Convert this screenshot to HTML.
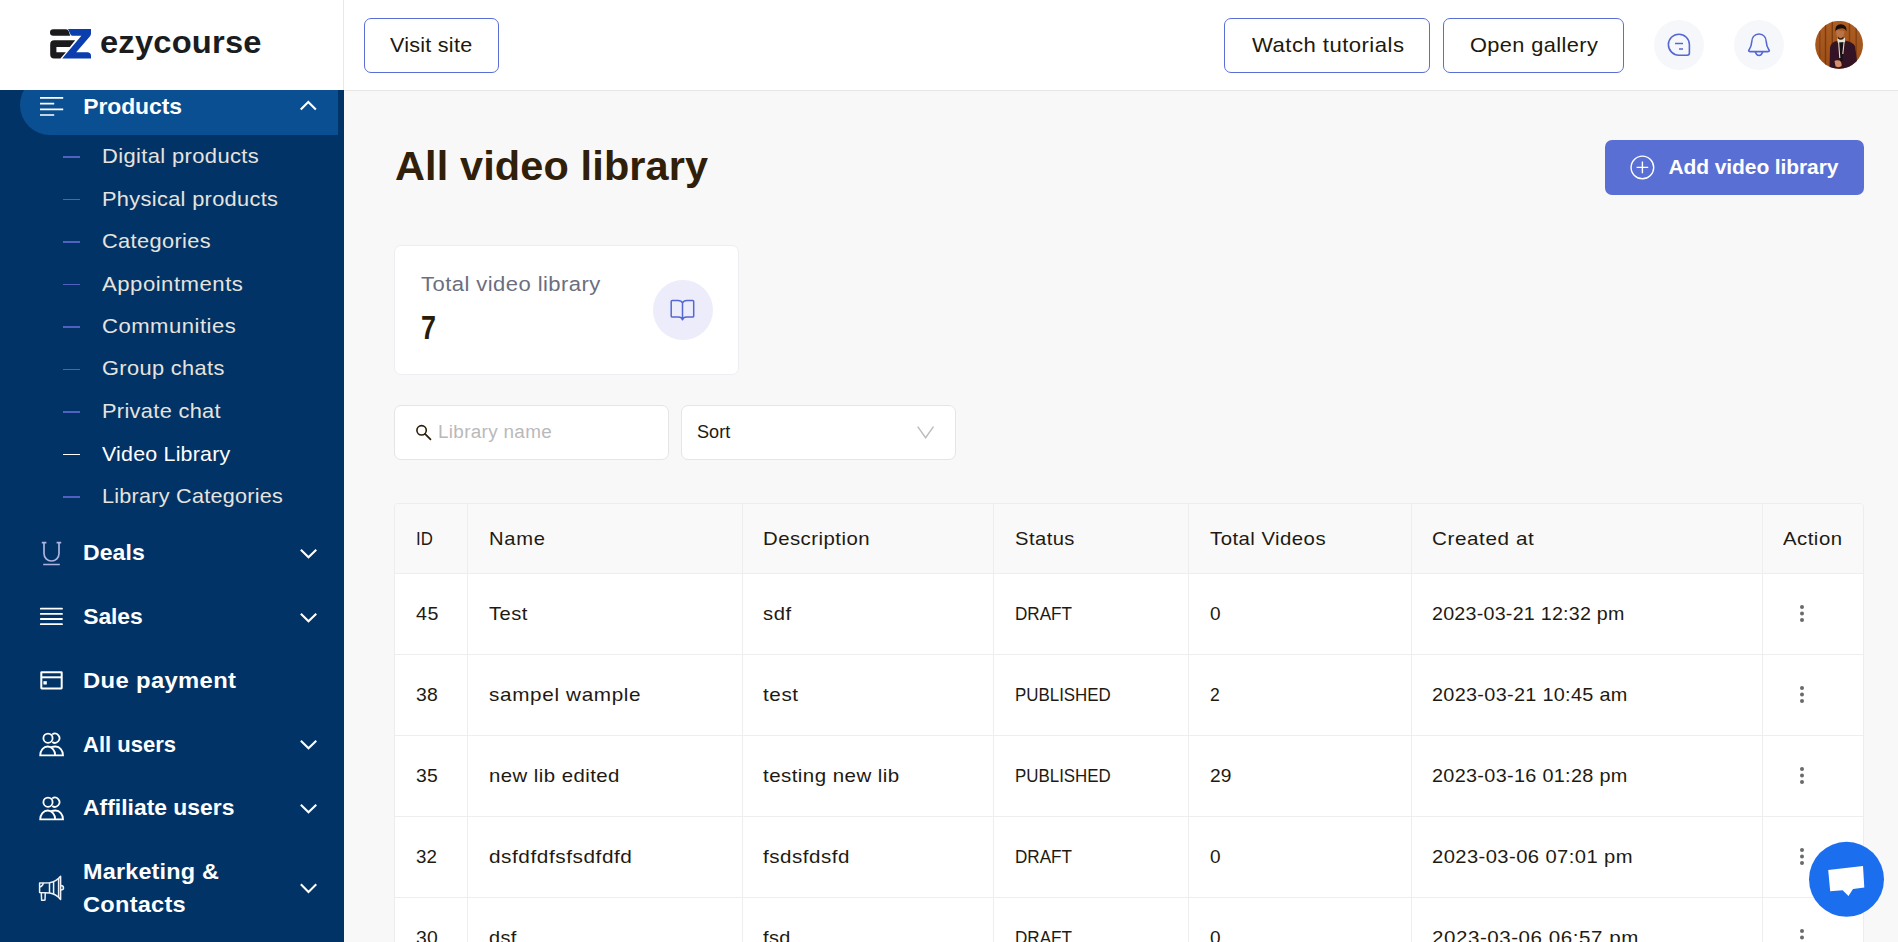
<!DOCTYPE html>
<html><head><meta charset="utf-8">
<style>
html,body{margin:0;padding:0;}
body{width:1898px;height:942px;overflow:hidden;position:relative;background:#f8f8f8;font-family:"Liberation Sans",sans-serif;}
.t{position:absolute;white-space:nowrap;}
.abs{position:absolute;}
#header{position:absolute;left:0;top:0;width:1898px;height:90px;background:#fff;}
#hline{position:absolute;left:344px;top:90px;width:1554px;height:1px;background:#e6e6e6;}
#vline{position:absolute;left:343px;top:0;width:1px;height:90px;background:#e8e8e8;}
.obtn{position:absolute;top:18px;height:53px;border:1px solid #5a6fd6;border-radius:7px;background:#fff;}
.circ{position:absolute;top:20px;width:50px;height:50px;border-radius:50%;background:#f6f7fa;}
#sidebar{position:absolute;left:0;top:90px;width:344px;height:852px;background:#023366;overflow:hidden;}
#pill{position:absolute;left:20px;top:-15px;width:318px;height:60px;border-radius:30px 0 0 30px;background:#0b4f93;}
.dash{position:absolute;left:63px;width:17px;height:2px;background:#4f62c4;}
.card{position:absolute;background:#fff;border:1px solid #eceef2;border-radius:7px;}
.inp{position:absolute;top:405px;height:53px;background:#fff;border:1px solid #e5e5e5;border-radius:7px;}
#table{position:absolute;left:394px;top:503px;width:1468px;height:460px;background:#fff;border:1px solid #ededed;border-radius:4px 4px 0 0;overflow:hidden;}
.hl{position:absolute;left:395px;width:1468px;height:1px;background:#eeeeee;}
.vl{position:absolute;top:504px;width:1px;height:440px;background:#eeeeee;}
</style></head>
<body>
<div id="header"></div>
<div id="vline"></div>
<div id="hline"></div>
<!-- logo -->
<svg class="abs" style="left:45px;top:25px" width="50" height="38" viewBox="0 0 50 38">
<path fill="#1b1b1d" d="M8.2 4.2 L21 4.2 Q22.9 4.2 23.7 6.2 L25.2 10.7 L8.2 10.7 Q5 10.7 5 7.45 Q5 4.2 8.2 4.2 Z"/>
<path fill="#1b1b1d" d="M9.2 15.3 L30.2 15.3 L24.8 22 L11.4 22 L11.4 27.3 L20.8 27.3 L15.4 33.5 L9.2 33.5 Q5.2 33.5 5.2 29.5 L5.2 19.3 Q5.2 15.3 9.2 15.3 Z"/>
<path fill="#0a3dae" d="M23 4 L46 4 L46 8.5 Q46 10.2 44.6 11.8 L31.2 27.3 L42.2 27.3 Q46 27.3 46 31 L46 33.5 L17.2 33.5 L36.4 10.7 L27.6 10.7 Q26.2 10.7 25.4 9.2 Z"/>
</svg>
<div class="obtn" style="left:364px;width:133px;"></div>
<div class="obtn" style="left:1224px;width:204px;"></div>
<div class="obtn" style="left:1443px;width:179px;"></div>
<div class="circ" style="left:1654px;"></div>
<div class="circ" style="left:1734px;"></div>
<!-- chat icon -->
<svg class="abs" style="left:1660px;top:26px" width="40" height="40" viewBox="1660 26 40 40">
<path fill="none" stroke="#5468d4" stroke-width="1.6" d="M1689.4 44.7 L1689.4 53 Q1689.4 55.2 1687.2 55.2 L1679 55.2 A10.5 10.5 0 1 1 1689.4 44.7 Z"/>
<path stroke="#5468d4" stroke-width="1.6" d="M1675 43.5 H1683 M1679 49 H1683"/>
</svg>
<!-- bell icon -->
<svg class="abs" style="left:1740px;top:26px" width="40" height="40" viewBox="1740 26 40 40">
<path fill="none" stroke="#5468d4" stroke-width="1.6" stroke-linejoin="round" d="M1759 34 C1754 34 1752 38 1751.8 41.5 C1751.6 45 1751 47 1749 50 Q1748 51.6 1750 51.6 L1768 51.6 Q1770 51.6 1769 50 C1767 47 1766.4 45 1766.2 41.5 C1766 38 1764 34 1759 34 Z"/>
<path fill="none" stroke="#5468d4" stroke-width="1.6" d="M1755.2 51.8 Q1756.5 55.5 1759 55.5 Q1761.5 55.5 1762.8 51.8"/>
</svg>
<!-- avatar -->
<svg class="abs" style="left:1815px;top:21px" width="48" height="48" viewBox="0 0 48 48">
<defs><clipPath id="av"><circle cx="24.1" cy="23.8" r="23.9"/></clipPath>
<linearGradient id="wood" x1="0" x2="0" y1="0" y2="1"><stop offset="0" stop-color="#ad5e22"/><stop offset="1" stop-color="#9c4e18"/></linearGradient></defs>
<g clip-path="url(#av)">
<rect width="48" height="48" fill="url(#wood)"/>
<rect x="4" y="0" width="1.6" height="48" fill="#7a3a10" opacity="0.55"/>
<rect x="9.8" y="0" width="1.4" height="48" fill="#6a300c" opacity="0.7"/>
<rect x="16.6" y="0" width="1.4" height="48" fill="#6a300c" opacity="0.7"/>
<rect x="33.8" y="0" width="1.4" height="48" fill="#6a300c" opacity="0.6"/>
<rect x="40.5" y="0" width="1.4" height="48" fill="#6a300c" opacity="0.6"/>
<path d="M14.5 48 L15 27 Q15.5 22 20 20.5 L24 19.5 L30 19.5 Q38 21 40 25 L43 48 Z" fill="#331324"/>
<path d="M23 19.5 L29.5 19 L28 22 L27.5 40 L25.5 40 L24.5 22 Z" fill="#141014"/>
<path d="M23.5 19.5 L24.8 37 M29.3 19.3 L27.8 33" stroke="#e8dcc8" stroke-width="1.1" fill="none"/>
<path d="M22.2 17.6 L30 16.8 L30.2 21 L22.6 21.6 Z" fill="#e8e0d0"/>
<path d="M21 9 Q21 17.8 25 18.4 Q29 18.2 29.4 10 Z" fill="#b87448"/>
<path d="M23 15.5 Q25 18.8 28.5 15.8 L28.6 18 Q25 19.5 23 17.4 Z" fill="#3a1e12"/>
<path d="M20.2 10.6 Q19.8 3.4 25.6 3.2 Q32.2 3.4 31.6 10.4 Q29.6 6.8 25.8 7.4 Q22 7.4 20.2 10.6 Z" fill="#1c0e0a"/>
<path d="M19.5 40 Q21 38.8 24.5 39.5 Q27 41 26.6 45 Q24 47.2 20.5 45.2 Z" fill="#d49068"/>
</g>
</svg>
<!-- sidebar -->
<div id="sidebar">
<div id="pill"></div>
</div>
<svg class="abs" style="left:0;top:90px" width="344" height="852" viewBox="0 90 344 852">
<!-- products icon -->
<g stroke="#ffffff" stroke-width="1.7">
<path d="M40 97.9 H63.2 M40 103.6 H54.2 M40 109.3 H63.2 M40 115 H54.2"/>
</g>
<path d="M301.5 108.8 L308.3 102 L315.1 108.8" fill="none" stroke="#fff" stroke-width="2.1" stroke-linecap="square"/>
<!-- deals U -->
<g fill="none" stroke="#aeb3e0" stroke-width="1.7">
<path d="M41.8 542.6 H46.4 M56.6 542.6 H61.2 M44 542.6 V553.5 A7.5 7.5 0 0 0 59 553.5 V542.6 M43.2 564.5 H59.8"/>
</g>
<!-- sales lines -->
<g stroke="#fff" stroke-width="1.8" stroke-linecap="round">
<path d="M40.8 608.7 H62 M40.8 613.9 H62 M40.8 619 H62 M40.8 624.2 H62"/>
</g>
<!-- due payment card -->
<g fill="none" stroke="#fff" stroke-width="2">
<rect x="41.3" y="672.2" width="20.4" height="16.3" rx="0.4"/>
<path d="M41.3 677.3 H61.7"/>
</g>
<rect x="43.4" y="681.2" width="3.4" height="3.3" fill="#fff"/>
<!-- users icons -->
<g fill="none" stroke="#fff" stroke-width="1.8">
<circle cx="48" cy="738.2" r="4.6"/><path d="M52.2 734.4 A4.6 4.6 0 1 1 52.2 742"/>
<path d="M40.2 755.3 A7.5 8.8 0 0 1 55.2 755.3 Z M51.2 747.2 Q53 746.5 55.6 746.5 A7.4 8.8 0 0 1 63 755.3 H55.2"/>
<circle cx="48" cy="802.2" r="4.6"/><path d="M52.2 798.4 A4.6 4.6 0 1 1 52.2 806"/>
<path d="M40.2 819.3 A7.5 8.8 0 0 1 55.2 819.3 Z M51.2 811.2 Q53 810.5 55.6 810.5 A7.4 8.8 0 0 1 63 819.3 H55.2"/>
</g>
<!-- megaphone -->
<g fill="none" stroke="#eef0f6" stroke-width="1.5" stroke-linejoin="round">
<path d="M39.6 883 L49.5 882.8 Q56 882 60.6 876.3 L60.6 899.4 Q56 893.8 49.5 893 L39.6 892.6 Z"/>
<path d="M49.5 882.8 V893 M53.6 881.6 V894.2 M58.6 878.5 V897.3"/>
<path d="M60.6 885.5 Q63.5 885.5 63.5 888 Q63.5 890 60.6 890"/>
<path d="M41.3 892.6 L41.6 900.2 Q43 900.6 45 900 L45.3 892.8"/>
<path d="M39.8 887 Q42.5 886.5 43.4 883"/>
</g>
<!-- chevrons -->
<g fill="none" stroke="#fff" stroke-width="2.1" stroke-linecap="square" stroke-linejoin="miter">
<path d="M301.6 550.4 L308.5 557.3 L315.5 550.4"/>
<path d="M301.6 614.4 L308.5 621.3 L315.5 614.4"/>
<path d="M301.6 741.4 L308.5 748.3 L315.5 741.4"/>
<path d="M301.6 805.4 L308.5 812.3 L315.5 805.4"/>
<path d="M301.6 885 L308.5 891.9 L315.5 885"/>
</g>
</svg>
<div class="dash" style="top:156px"></div>
<div class="dash" style="top:199px;height:1px"></div>
<div class="dash" style="top:241px"></div>
<div class="dash" style="top:284px;height:1px"></div>
<div class="dash" style="top:326px"></div>
<div class="dash" style="top:369px;height:1px"></div>
<div class="dash" style="top:411px"></div>
<div class="dash" style="top:454px;height:1px;background:#fff"></div>
<div class="dash" style="top:496px"></div>
<!-- main -->
<div class="abs" style="left:1605px;top:140px;width:259px;height:55px;border-radius:7px;background:#5a6fd3;"></div>
<svg class="abs" style="left:1628px;top:153px" width="30" height="30" viewBox="1628 153 30 30">
<circle cx="1642.4" cy="167.4" r="11.3" fill="none" stroke="#fff" stroke-width="1.4"/>
<path d="M1636.6 167.4 H1648.2 M1642.4 161.6 V173.2" stroke="#fff" stroke-width="1.4"/>
</svg>
<div class="card" style="left:394px;top:245px;width:343px;height:128px;"></div>
<div class="abs" style="left:653px;top:280px;width:60px;height:60px;border-radius:50%;background:#ececfb;"></div>
<svg class="abs" style="left:665px;top:292px" width="36" height="36" viewBox="665 292 36 36">
<path fill="none" stroke="#5468d4" stroke-width="1.5" stroke-linejoin="round" d="M682.5 303 Q681.5 300.4 678 300.4 L672.3 300.4 Q671.2 300.4 671.2 301.5 L671.2 316 Q671.2 317.1 672.3 317.1 L678.5 317.1 Q681.5 317.1 682.5 319.8 Q683.5 317.1 686.5 317.1 L692.6 317.1 Q693.7 317.1 693.7 316 L693.7 301.5 Q693.7 300.4 692.6 300.4 L687 300.4 Q683.5 300.4 682.5 303 Z M682.5 303 V320.3"/>
</svg>
<div class="inp" style="left:394px;width:273px;"></div>
<div class="inp" style="left:681px;width:273px;"></div>
<svg class="abs" style="left:410px;top:420px" width="26" height="26" viewBox="410 420 26 26">
<circle cx="421.6" cy="430.3" r="4.7" fill="none" stroke="#2b1d08" stroke-width="1.6"/>
<path d="M425 433.8 L430.5 439.4" stroke="#2b1d08" stroke-width="1.7" stroke-linecap="round"/>
</svg>
<svg class="abs" style="left:910px;top:420px" width="30" height="24" viewBox="910 420 30 24">
<path d="M917.7 426.6 L925.6 437.6 L933.5 426.6" fill="none" stroke="#bdbdbd" stroke-width="1.5"/>
</svg>
<!-- table -->
<div id="table"></div>
<div class="abs" style="left:395px;top:504px;width:1468px;height:69px;background:#f9f9f9;border-radius:3px 3px 0 0;"></div>
<div class="hl" style="top:573px"></div>
<div class="hl" style="top:654px"></div>
<div class="hl" style="top:735px"></div>
<div class="hl" style="top:816px"></div>
<div class="hl" style="top:897px"></div>
<div class="vl" style="left:467px"></div>
<div class="vl" style="left:742px"></div>
<div class="vl" style="left:993px"></div>
<div class="vl" style="left:1188px"></div>
<div class="vl" style="left:1411px"></div>
<div class="vl" style="left:1762px"></div>
<svg class="abs" style="left:1790px;top:590px" width="24" height="352" viewBox="1790 590 24 352">
<g fill="#6a6a6a">
<circle cx="1802" cy="607.1" r="2"/><circle cx="1802" cy="613.5" r="2"/><circle cx="1802" cy="619.9" r="2"/>
<circle cx="1802" cy="688.1" r="2"/><circle cx="1802" cy="694.5" r="2"/><circle cx="1802" cy="700.9" r="2"/>
<circle cx="1802" cy="769.1" r="2"/><circle cx="1802" cy="775.5" r="2"/><circle cx="1802" cy="781.9" r="2"/>
<circle cx="1802" cy="850.1" r="2"/><circle cx="1802" cy="856.5" r="2"/><circle cx="1802" cy="862.9" r="2"/>
<circle cx="1802" cy="931.1" r="2"/><circle cx="1802" cy="937.5" r="2"/><circle cx="1802" cy="943.9" r="2"/>
</g>
</svg>
<div class="t" style="left:99.70px;top:26.00px;font-size:32.2px;line-height:32.2px;letter-spacing:0.197px;font-weight:bold;color:#1c1c1e;transform:scaleX(1.0152);transform-origin:0 0;">ezycourse</div>
<div class="t" style="left:390.40px;top:35.00px;font-size:20.7px;line-height:20.7px;letter-spacing:0.234px;color:#21180a;transform:scaleX(1.0430);transform-origin:0 0;">Visit site</div>
<div class="t" style="left:1251.50px;top:35.00px;font-size:20.7px;line-height:20.7px;letter-spacing:0.425px;color:#21180a;transform:scaleX(1.0701);transform-origin:0 0;">Watch tutorials</div>
<div class="t" style="left:1469.50px;top:35.00px;font-size:20.7px;line-height:20.7px;letter-spacing:0.362px;color:#21180a;transform:scaleX(1.0537);transform-origin:0 0;">Open gallery</div>
<div class="t" style="left:83.20px;top:95.00px;font-size:22.9px;line-height:22.9px;letter-spacing:-0.057px;font-weight:bold;color:#ffffff;">Products</div>
<div class="t" style="left:102.00px;top:146.00px;font-size:20.8px;line-height:20.8px;letter-spacing:0.338px;color:#e6e3df;transform:scaleX(1.0561);transform-origin:0 0;">Digital products</div>
<div class="t" style="left:102.00px;top:189.00px;font-size:20.8px;line-height:20.8px;letter-spacing:0.310px;color:#e6e3df;transform:scaleX(1.0479);transform-origin:0 0;">Physical products</div>
<div class="t" style="left:102.00px;top:231.00px;font-size:20.8px;line-height:20.8px;letter-spacing:0.343px;color:#e6e3df;transform:scaleX(1.0483);transform-origin:0 0;">Categories</div>
<div class="t" style="left:102.00px;top:274.00px;font-size:20.8px;line-height:20.8px;letter-spacing:0.468px;color:#e6e3df;transform:scaleX(1.0646);transform-origin:0 0;">Appointments</div>
<div class="t" style="left:102.00px;top:316.00px;font-size:20.8px;line-height:20.8px;letter-spacing:0.471px;color:#e6e3df;transform:scaleX(1.0618);transform-origin:0 0;">Communities</div>
<div class="t" style="left:102.00px;top:358.00px;font-size:20.8px;line-height:20.8px;letter-spacing:0.347px;color:#e6e3df;transform:scaleX(1.0482);transform-origin:0 0;">Group chats</div>
<div class="t" style="left:102.00px;top:401.00px;font-size:20.8px;line-height:20.8px;letter-spacing:0.305px;color:#e6e3df;transform:scaleX(1.0481);transform-origin:0 0;">Private chat</div>
<div class="t" style="left:102.00px;top:444.00px;font-size:20.8px;line-height:20.8px;letter-spacing:0.194px;color:#ffffff;transform:scaleX(1.0295);transform-origin:0 0;">Video Library</div>
<div class="t" style="left:102.00px;top:486.00px;font-size:20.8px;line-height:20.8px;letter-spacing:0.249px;color:#e6e3df;transform:scaleX(1.0388);transform-origin:0 0;">Library Categories</div>
<div class="t" style="left:83.30px;top:541.00px;font-size:22.9px;line-height:22.9px;letter-spacing:0.060px;font-weight:bold;color:#ffffff;transform:scaleX(1.0059);transform-origin:0 0;">Deals</div>
<div class="t" style="left:83.30px;top:605.00px;font-size:22.9px;line-height:22.9px;letter-spacing:-0.100px;font-weight:bold;color:#ffffff;">Sales</div>
<div class="t" style="left:83.30px;top:669.00px;font-size:22.9px;line-height:22.9px;letter-spacing:0.358px;font-weight:bold;color:#ffffff;transform:scaleX(1.0388);transform-origin:0 0;">Due payment</div>
<div class="t" style="left:83.30px;top:733.00px;font-size:22.9px;line-height:22.9px;letter-spacing:0.000px;font-weight:bold;color:#ffffff;transform:scaleX(0.9617);transform-origin:0 0;">All users</div>
<div class="t" style="left:83.30px;top:796.00px;font-size:22.9px;line-height:22.9px;letter-spacing:0.003px;font-weight:bold;color:#ffffff;transform:scaleX(1.0004);transform-origin:0 0;">Affiliate users</div>
<div class="t" style="left:83.30px;top:860.00px;font-size:22.9px;line-height:22.9px;letter-spacing:0.188px;font-weight:bold;color:#ffffff;transform:scaleX(1.0220);transform-origin:0 0;">Marketing &amp;</div>
<div class="t" style="left:83.30px;top:893.00px;font-size:22.9px;line-height:22.9px;letter-spacing:0.266px;font-weight:bold;color:#ffffff;transform:scaleX(1.0294);transform-origin:0 0;">Contacts</div>
<div class="t" style="left:394.90px;top:146.00px;font-size:41px;line-height:41px;letter-spacing:0.136px;font-weight:bold;color:#30200a;transform:scaleX(1.0107);transform-origin:0 0;">All video library</div>
<div class="t" style="left:1668.50px;top:156.00px;font-size:21px;line-height:21px;letter-spacing:-0.100px;font-weight:bold;color:#ffffff;">Add video library</div>
<div class="t" style="left:420.60px;top:274.00px;font-size:20.5px;line-height:20.5px;letter-spacing:0.410px;color:#6b6e7e;transform:scaleX(1.0744);transform-origin:0 0;">Total video library</div>
<div class="t" style="left:420.85px;top:311.00px;font-size:33.5px;line-height:33.5px;letter-spacing:0.000px;font-weight:bold;color:#2a1c08;transform:scaleX(0.8038);transform-origin:0 0;">7</div>
<div class="t" style="left:438.00px;top:423.00px;font-size:18px;line-height:18px;letter-spacing:0.301px;color:#b9b9bb;transform:scaleX(1.0497);transform-origin:0 0;">Library name</div>
<div class="t" style="left:696.90px;top:423.00px;font-size:18px;line-height:18px;letter-spacing:0.027px;color:#1e1a12;transform:scaleX(1.0036);transform-origin:0 0;">Sort</div>
<div class="t" style="left:415.60px;top:529.00px;font-size:19px;line-height:19px;letter-spacing:0.000px;color:#1e1a12;transform:scaleX(0.8842);transform-origin:0 0;">ID</div>
<div class="t" style="left:489.30px;top:529.00px;font-size:19px;line-height:19px;letter-spacing:0.653px;color:#1e1a12;transform:scaleX(1.0615);transform-origin:0 0;">Name</div>
<div class="t" style="left:762.90px;top:529.00px;font-size:19px;line-height:19px;letter-spacing:0.429px;color:#1e1a12;transform:scaleX(1.0726);transform-origin:0 0;">Description</div>
<div class="t" style="left:1014.80px;top:529.00px;font-size:19px;line-height:19px;letter-spacing:0.422px;color:#1e1a12;transform:scaleX(1.0623);transform-origin:0 0;">Status</div>
<div class="t" style="left:1209.80px;top:529.00px;font-size:19px;line-height:19px;letter-spacing:0.421px;color:#1e1a12;transform:scaleX(1.0721);transform-origin:0 0;">Total Videos</div>
<div class="t" style="left:1432.00px;top:529.00px;font-size:19px;line-height:19px;letter-spacing:0.531px;color:#1e1a12;transform:scaleX(1.0879);transform-origin:0 0;">Created at</div>
<div class="t" style="left:1783.30px;top:529.00px;font-size:19px;line-height:19px;letter-spacing:0.463px;color:#1e1a12;transform:scaleX(1.0705);transform-origin:0 0;">Action</div>
<div class="t" style="left:415.80px;top:604.00px;font-size:19px;line-height:19px;letter-spacing:0.464px;color:#1e1a12;transform:scaleX(1.0341);transform-origin:0 0;">45</div>
<div class="t" style="left:489.00px;top:604.00px;font-size:19px;line-height:19px;letter-spacing:0.440px;color:#1e1a12;transform:scaleX(1.0603);transform-origin:0 0;">Test</div>
<div class="t" style="left:763.00px;top:604.00px;font-size:19px;line-height:19px;letter-spacing:0.508px;color:#1e1a12;transform:scaleX(1.0635);transform-origin:0 0;">sdf</div>
<div class="t" style="left:1015.00px;top:604.00px;font-size:19px;line-height:19px;letter-spacing:0.000px;color:#1e1a12;transform:scaleX(0.9005);transform-origin:0 0;">DRAFT</div>
<div class="t" style="left:1210.00px;top:604.00px;font-size:19px;line-height:19px;letter-spacing:0.000px;color:#1e1a12;">0</div>
<div class="t" style="left:1432.00px;top:604.00px;font-size:19px;line-height:19px;letter-spacing:0.230px;color:#1e1a12;transform:scaleX(1.0353);transform-origin:0 0;">2023-03-21 12:32 pm</div>
<div class="t" style="left:415.80px;top:685.00px;font-size:19px;line-height:19px;letter-spacing:0.275px;color:#1e1a12;transform:scaleX(1.0199);transform-origin:0 0;">38</div>
<div class="t" style="left:489.00px;top:685.00px;font-size:19px;line-height:19px;letter-spacing:0.600px;color:#1e1a12;transform:scaleX(1.0891);transform-origin:0 0;">sampel wample</div>
<div class="t" style="left:763.00px;top:685.00px;font-size:19px;line-height:19px;letter-spacing:0.540px;color:#1e1a12;transform:scaleX(1.0863);transform-origin:0 0;">test</div>
<div class="t" style="left:1015.00px;top:685.00px;font-size:19px;line-height:19px;letter-spacing:0.000px;color:#1e1a12;transform:scaleX(0.8895);transform-origin:0 0;">PUBLISHED</div>
<div class="t" style="left:1210.00px;top:685.00px;font-size:19px;line-height:19px;letter-spacing:0.000px;color:#1e1a12;transform:scaleX(0.9245);transform-origin:0 0;">2</div>
<div class="t" style="left:1432.00px;top:685.00px;font-size:19px;line-height:19px;letter-spacing:0.289px;color:#1e1a12;transform:scaleX(1.0449);transform-origin:0 0;">2023-03-21 10:45 am</div>
<div class="t" style="left:415.80px;top:766.00px;font-size:19px;line-height:19px;letter-spacing:0.275px;color:#1e1a12;transform:scaleX(1.0199);transform-origin:0 0;">35</div>
<div class="t" style="left:489.00px;top:766.00px;font-size:19px;line-height:19px;letter-spacing:0.407px;color:#1e1a12;transform:scaleX(1.0733);transform-origin:0 0;">new lib edited</div>
<div class="t" style="left:763.00px;top:766.00px;font-size:19px;line-height:19px;letter-spacing:0.418px;color:#1e1a12;transform:scaleX(1.0787);transform-origin:0 0;">testing new lib</div>
<div class="t" style="left:1015.00px;top:766.00px;font-size:19px;line-height:19px;letter-spacing:0.000px;color:#1e1a12;transform:scaleX(0.8895);transform-origin:0 0;">PUBLISHED</div>
<div class="t" style="left:1210.00px;top:766.00px;font-size:19px;line-height:19px;letter-spacing:0.119px;color:#1e1a12;transform:scaleX(1.0085);transform-origin:0 0;">29</div>
<div class="t" style="left:1432.00px;top:766.00px;font-size:19px;line-height:19px;letter-spacing:0.289px;color:#1e1a12;transform:scaleX(1.0449);transform-origin:0 0;">2023-03-16 01:28 pm</div>
<div class="t" style="left:415.80px;top:847.00px;font-size:19px;line-height:19px;letter-spacing:0.000px;color:#1e1a12;transform:scaleX(0.9858);transform-origin:0 0;">32</div>
<div class="t" style="left:489.00px;top:847.00px;font-size:19px;line-height:19px;letter-spacing:0.504px;color:#1e1a12;transform:scaleX(1.0937);transform-origin:0 0;">dsfdfdfsfsdfdfd</div>
<div class="t" style="left:763.00px;top:847.00px;font-size:19px;line-height:19px;letter-spacing:0.476px;color:#1e1a12;transform:scaleX(1.0813);transform-origin:0 0;">fsdsfdsfd</div>
<div class="t" style="left:1015.00px;top:847.00px;font-size:19px;line-height:19px;letter-spacing:0.000px;color:#1e1a12;transform:scaleX(0.9005);transform-origin:0 0;">DRAFT</div>
<div class="t" style="left:1210.00px;top:847.00px;font-size:19px;line-height:19px;letter-spacing:0.000px;color:#1e1a12;">0</div>
<div class="t" style="left:1432.00px;top:847.00px;font-size:19px;line-height:19px;letter-spacing:0.395px;color:#1e1a12;transform:scaleX(1.0624);transform-origin:0 0;">2023-03-06 07:01 pm</div>
<div class="t" style="left:415.80px;top:928.00px;font-size:19px;line-height:19px;letter-spacing:0.275px;color:#1e1a12;transform:scaleX(1.0199);transform-origin:0 0;">30</div>
<div class="t" style="left:489.00px;top:928.00px;font-size:19px;line-height:19px;letter-spacing:0.389px;color:#1e1a12;transform:scaleX(1.0480);transform-origin:0 0;">dsf</div>
<div class="t" style="left:763.00px;top:928.00px;font-size:19px;line-height:19px;letter-spacing:0.386px;color:#1e1a12;transform:scaleX(1.0480);transform-origin:0 0;">fsd</div>
<div class="t" style="left:1015.00px;top:928.00px;font-size:19px;line-height:19px;letter-spacing:0.000px;color:#1e1a12;transform:scaleX(0.9005);transform-origin:0 0;">DRAFT</div>
<div class="t" style="left:1210.00px;top:928.00px;font-size:19px;line-height:19px;letter-spacing:0.000px;color:#1e1a12;">0</div>
<div class="t" style="left:1432.00px;top:928.00px;font-size:19px;line-height:19px;letter-spacing:0.506px;color:#1e1a12;transform:scaleX(1.0812);transform-origin:0 0;">2023-03-06 06:57 pm</div>
<!-- floating chat -->
<svg class="abs" style="left:1806px;top:838px" width="82" height="82" viewBox="0 0 82 82">
<circle cx="40.5" cy="41.3" r="37.5" fill="#1b6fef"/>
<path fill="#fff" d="M22.2 32 L57 28 L58.3 49.6 L47 50.9 L42.5 57.9 L36.6 52.2 L24.2 53.3 Z"/>
</svg>
</body></html>
